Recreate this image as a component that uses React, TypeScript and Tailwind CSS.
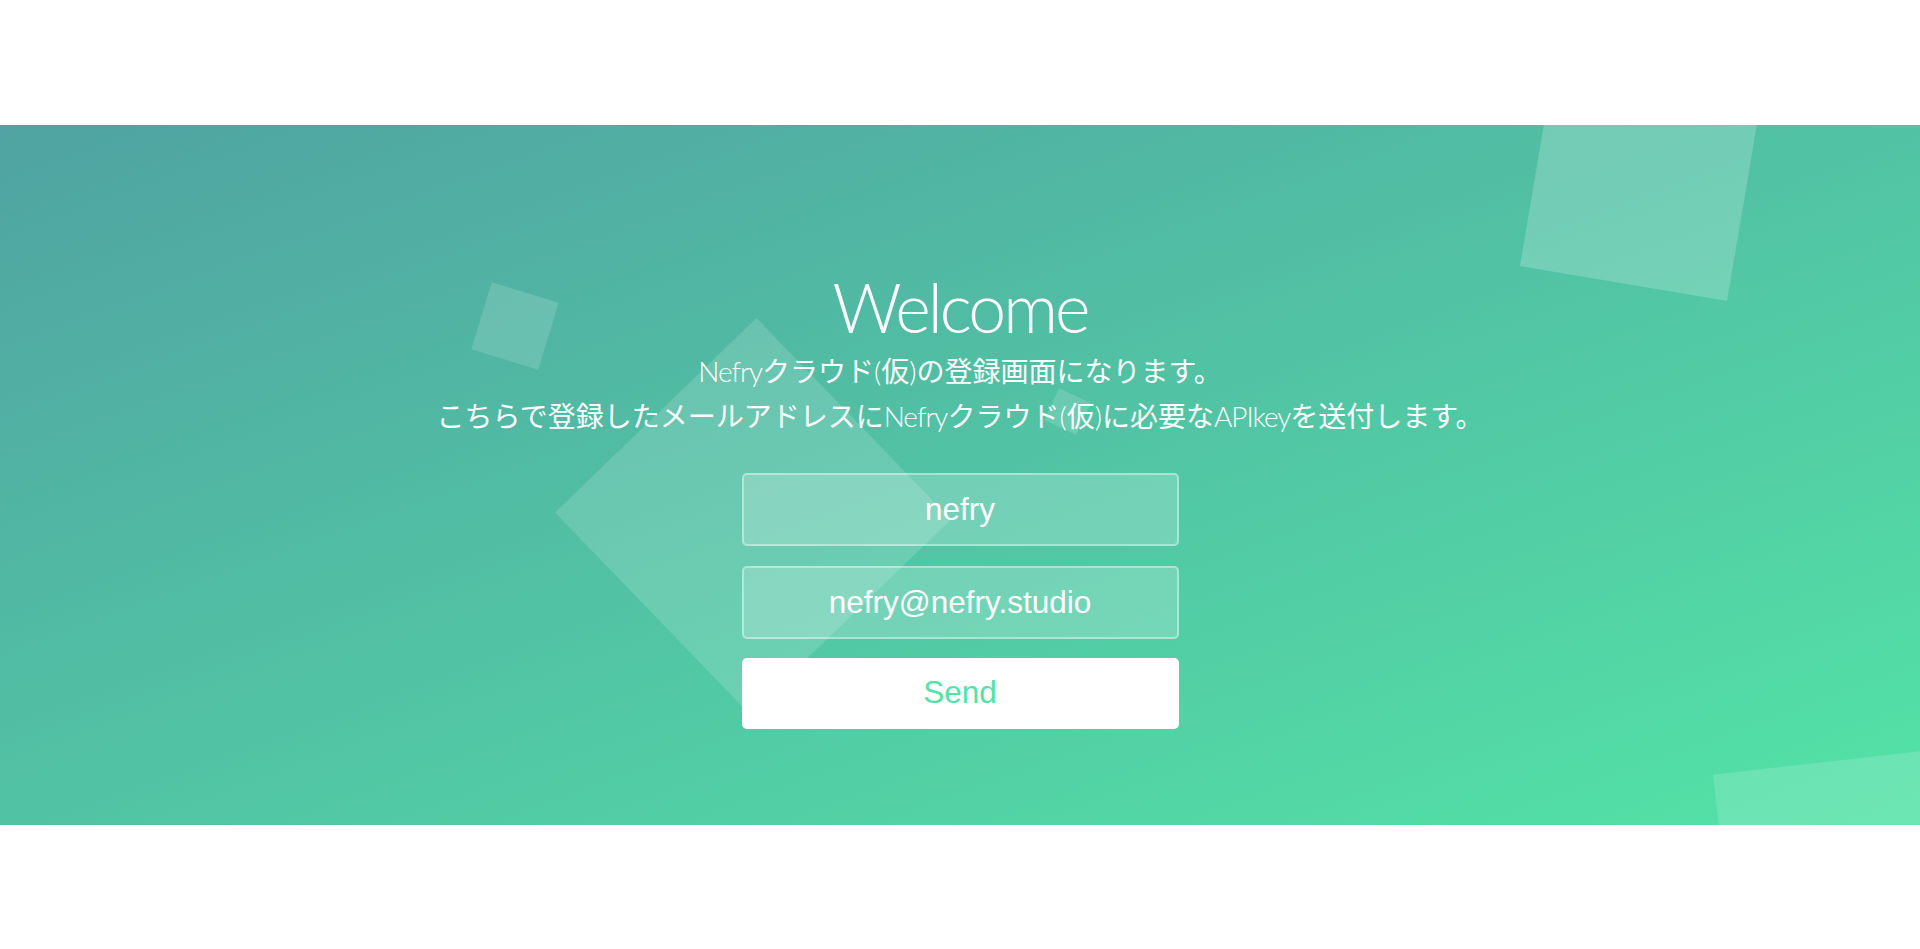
export default function App() {
  return (
    <div className="flex h-screen flex-col justify-center bg-white">
      <div className="relative h-[700px] overflow-hidden bg-[linear-gradient(to_bottom_right,#50a3a2_0%,#53e3a6_100%)]">
        {/* floating squares */}
        <ul className="absolute inset-0 z-0">
          <li className="absolute left-[480px] top-[166px] h-[70px] w-[70px] rotate-[17deg] bg-white/15" />
          <li className="absolute left-[613px] top-[251px] h-[280px] w-[280px] rotate-[46deg] bg-white/15" />
          <li className="absolute left-[1050px] top-[269px] h-[35px] w-[35px] rotate-[25deg] bg-white/15" />
          <li className="absolute left-[1536px] top-[-50px] h-[210px] w-[210px] rotate-[9.6deg] bg-white/20" />
          <li className="absolute left-[1728px] top-[633px] h-[280px] w-[280px] rotate-[-6.5deg] bg-white/15" />
        </ul>

        <div className="relative z-10 pt-[140px] text-center text-white">
          <h1 className="font-['Lato','Open_Sans',sans-serif] text-[68px] font-light leading-[83px] tracking-[-3px]">
            Welcome
          </h1>
          <p className="font-['Noto_Sans_CJK_JP',sans-serif] text-[28px] leading-[44px]">
            <span className="font-['Lato',sans-serif] font-light tracking-[-1px]">Nefry</span>クラウド
            <span className="font-['Lato',sans-serif] font-light">(</span>仮
            <span className="font-['Lato',sans-serif] font-light">)</span>の登録画面になります。
            <br />
            こちらで登録したメールアドレスに
            <span className="font-['Lato',sans-serif] font-light tracking-[-1px]">Nefry</span>クラウド
            <span className="font-['Lato',sans-serif] font-light">(</span>仮
            <span className="font-['Lato',sans-serif] font-light">)</span>に必要な
            <span className="font-['Lato',sans-serif] font-light tracking-[-1px]">APIkey</span>を送付します。
          </p>

          <form className="mt-[35px] flex flex-col items-center font-['Liberation_Sans',Arial,sans-serif]">
            <input
              type="text"
              placeholder="nefry"
              className="mb-[20px] h-[73px] w-[437px] rounded-[5px] border-2 border-white/40 bg-white/20 text-center text-[31.5px] text-white outline-none placeholder:text-white"
            />
            <input
              type="text"
              placeholder="nefry@nefry.studio"
              className="mb-[19px] h-[73px] w-[437px] rounded-[5px] border-2 border-white/40 bg-white/20 text-center text-[31.5px] text-white outline-none placeholder:text-white"
            />
            <button
              type="button"
              className="h-[71px] w-[437px] rounded-[5px] bg-white text-[31.5px] text-[#53e3a6]"
            >
              Send
            </button>
          </form>
        </div>
      </div>
    </div>
  );
}
